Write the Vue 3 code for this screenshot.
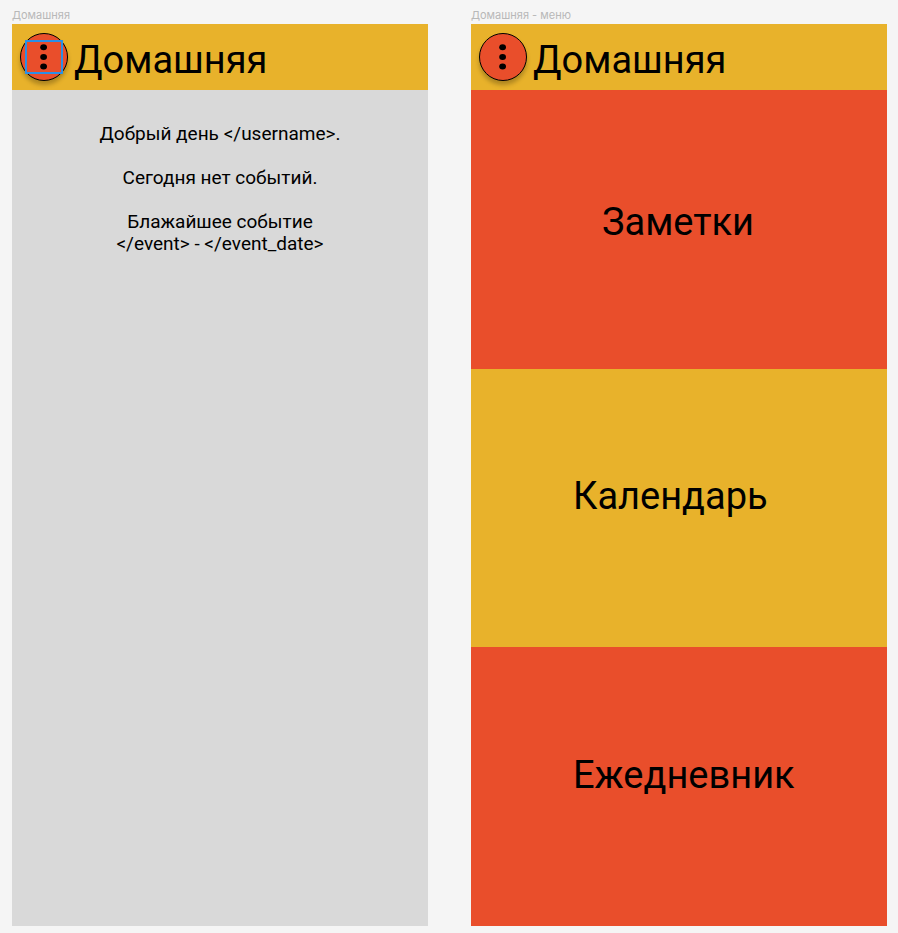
<script setup>
const menu = [
  { name: 'Заметки', kind: 'notes' },
  { name: 'Календарь', kind: 'calendar' },
  { name: 'Ежедневник', kind: 'diary' },
]
</script>

<template>
  <main class="canvas">
    <section class="frame">
      <p class="label">Домашняя</p>
      <div class="screen">
        <header class="bar">
          <button class="round" type="button" aria-label="Меню">
            <svg class="dots" viewBox="0 0 46 46" aria-hidden="true">
              <ellipse cx="22.6" cy="13.3" rx="3.4" ry="3" />
              <ellipse cx="22.6" cy="23" rx="3.4" ry="3" />
              <ellipse cx="22.6" cy="32.6" rx="3.4" ry="3" />
            </svg>
            <span class="selection"></span>
          </button>
          <h1 class="title">Домашняя</h1>
        </header>
        <div class="message">
          <p>Добрый день &lt;/username&gt;.</p>
          <p>Сегодня нет событий.</p>
          <p>Блажайшее событие<br />&lt;/event&gt; - &lt;/event_date&gt;</p>
        </div>
      </div>
    </section>

    <section class="frame">
      <p class="label">Домашняя - меню</p>
      <div class="screen">
        <header class="bar">
          <button class="round" type="button" aria-label="Меню">
            <svg class="dots" viewBox="0 0 46 46" aria-hidden="true">
              <ellipse cx="22.6" cy="13.3" rx="3.4" ry="3" />
              <ellipse cx="22.6" cy="23" rx="3.4" ry="3" />
              <ellipse cx="22.6" cy="32.6" rx="3.4" ry="3" />
            </svg>
          </button>
          <h1 class="title">Домашняя</h1>
        </header>
        <nav class="menu">
          <a v-for="item in menu" :key="item.kind" class="item" :class="item.kind" href="#">{{ item.name }}</a>
        </nav>
      </div>
    </section>
  </main>
</template>

<style>
body {
  margin: 0;
  background: #f5f5f5;
}
</style>

<style scoped>
.canvas {
  box-sizing: border-box;
  min-height: 100vh;
  display: grid;
  grid-template-columns: 1fr 1fr;
  gap: 43px;
  padding: 8px 11px 7px 12px;
  font-family: Roboto, sans-serif;
  color: #000;
}
.frame {
  display: flex;
  flex-direction: column;
}
.label {
  margin: 0;
  padding-bottom: 2px;
  font: 11px/14px Inter, sans-serif;
  color: #b8b8b8;
}
.screen {
  flex: 1;
  display: flex;
  flex-direction: column;
  background: #d9d9d9;
}
.bar {
  display: flex;
  align-items: center;
  gap: 6px;
  height: 66px;
  padding-left: 8px;
  background: #e8b22b;
}
.round {
  position: relative;
  width: 48px;
  height: 48px;
  padding: 0;
  border: 1px solid #000;
  border-radius: 50%;
  background: #e94e2b;
  box-shadow: 0 4px 4px rgba(0, 0, 0, 0.25);
}
.dots {
  display: block;
  width: 100%;
  height: 100%;
}
.selection {
  position: absolute;
  inset: 6px 4px;
  border: 2px solid #2b8fe6;
}
.title {
  margin: 0;
  padding-top: 6px;
  font-size: 38px;
  line-height: 46px;
  font-weight: 400;
}
.message {
  padding-top: 33px;
  font-size: 19px;
  line-height: 22px;
  text-align: center;
}
.message p {
  margin: 0 0 22px;
}
.menu {
  flex: 1;
  display: grid;
  grid-auto-rows: 1fr;
}
.item {
  display: flex;
  align-items: center;
  padding: 0 0 24px 102px;
  background: #e94e2b;
  color: #000;
  font-size: 38px;
  line-height: 46px;
  text-decoration: none;
}
.notes {
  justify-content: center;
  padding: 0 2px 14px 0;
}
.calendar {
  background: #e8b22b;
}
</style>
